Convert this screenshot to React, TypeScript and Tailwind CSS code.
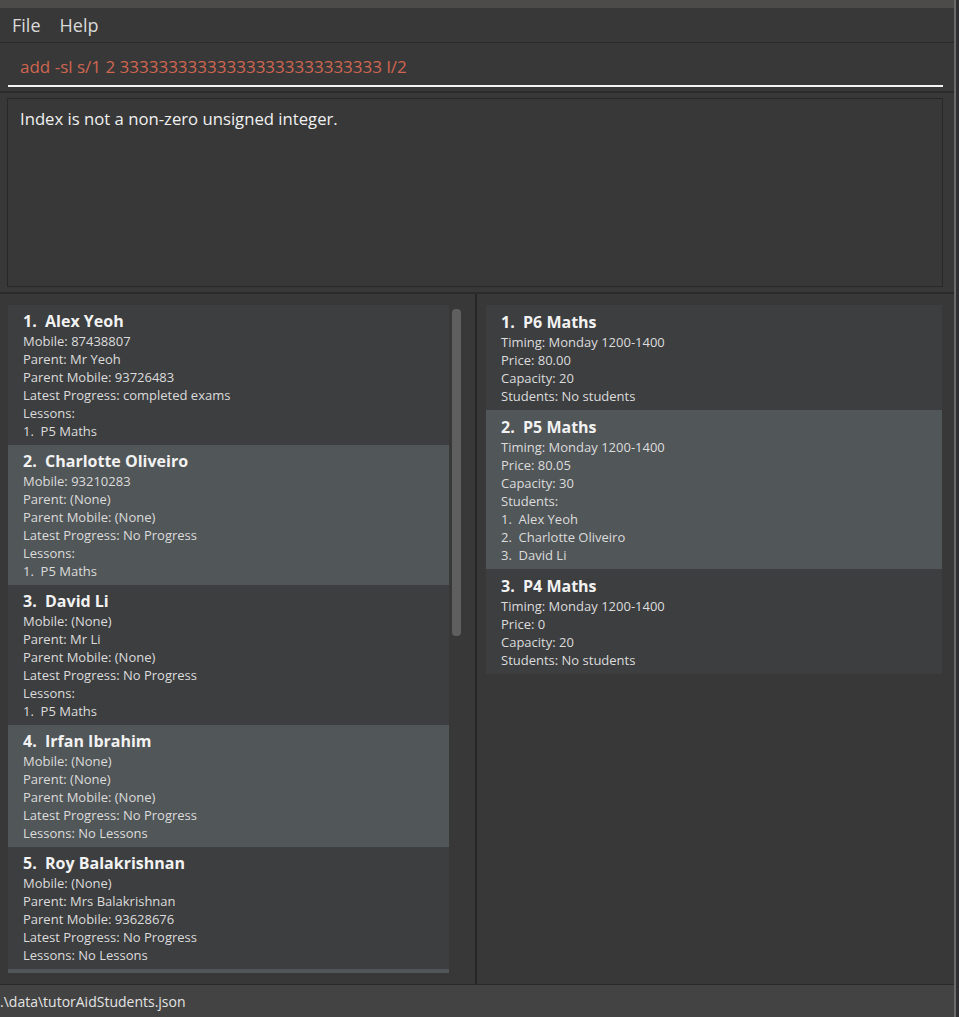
import React from 'react'

type Student = {
  name: string
  mobile: string
  parent: string
  parentMobile: string
  progress: string
  lessons: string[]
}

type Lesson = {
  name: string
  timing: string
  price: string
  capacity: string
  students: string[]
}

const students: Student[] = [
  { name: 'Alex Yeoh', mobile: '87438807', parent: 'Mr Yeoh', parentMobile: '93726483', progress: 'completed exams', lessons: ['P5 Maths'] },
  { name: 'Charlotte Oliveiro', mobile: '93210283', parent: '(None)', parentMobile: '(None)', progress: 'No Progress', lessons: ['P5 Maths'] },
  { name: 'David Li', mobile: '(None)', parent: 'Mr Li', parentMobile: '(None)', progress: 'No Progress', lessons: ['P5 Maths'] },
  { name: 'Irfan Ibrahim', mobile: '(None)', parent: '(None)', parentMobile: '(None)', progress: 'No Progress', lessons: [] },
  { name: 'Roy Balakrishnan', mobile: '(None)', parent: 'Mrs Balakrishnan', parentMobile: '93628676', progress: 'No Progress', lessons: [] },
]

const lessons: Lesson[] = [
  { name: 'P6 Maths', timing: 'Monday 1200-1400', price: '80.00', capacity: '20', students: [] },
  { name: 'P5 Maths', timing: 'Monday 1200-1400', price: '80.05', capacity: '30', students: ['Alex Yeoh', 'Charlotte Oliveiro', 'David Li'] },
  { name: 'P4 Maths', timing: 'Monday 1200-1400', price: '0', capacity: '20', students: [] },
]

function StudentCard({ s, i }: { s: Student; i: number }) {
  return (
    <div className={`shrink-0 pl-[15px] pt-[5px] pb-[5px] ${i % 2 === 1 ? 'bg-[#515658]' : 'bg-[#3c3e40]'}`}>
      <div className="whitespace-pre text-[16px] leading-[22px] font-bold text-[#f2f2f2]">{`${i + 1}.  ${s.name}`}</div>
      <div className="text-[13px] leading-[18px] text-[#dcdcdc] whitespace-pre">
        <div>Mobile: {s.mobile}</div>
        <div>Parent: {s.parent}</div>
        <div>Parent Mobile: {s.parentMobile}</div>
        <div>Latest Progress: {s.progress}</div>
        {s.lessons.length === 0 ? (
          <div>Lessons: No Lessons</div>
        ) : (
          <>
            <div>Lessons:</div>
            {s.lessons.map((l, j) => (
              <div key={j}>{`${j + 1}.  ${l}`}</div>
            ))}
          </>
        )}
      </div>
    </div>
  )
}

function LessonCard({ l, i }: { l: Lesson; i: number }) {
  return (
    <div className={`pl-[15px] pt-[6px] pb-[5px] ${i % 2 === 1 ? 'bg-[#515658]' : 'bg-[#3c3e40]'}`}>
      <div className="whitespace-pre text-[16px] leading-[22px] font-bold text-[#f2f2f2]">{`${i + 1}.  ${l.name}`}</div>
      <div className="text-[13px] leading-[18px] text-[#dcdcdc] whitespace-pre">
        <div>Timing: {l.timing}</div>
        <div>Price: {l.price}</div>
        <div>Capacity: {l.capacity}</div>
        {l.students.length === 0 ? (
          <div>Students: No students</div>
        ) : (
          <>
            <div>Students:</div>
            {l.students.map((s, j) => (
              <div key={j}>{`${j + 1}.  ${s}`}</div>
            ))}
          </>
        )}
      </div>
    </div>
  )
}

export default function App() {
  return (
    <div
      className="flex h-[1017px] w-[959px] overflow-hidden bg-[#383838]"
      style={{ fontFamily: '"Open Sans", "Noto Sans", sans-serif' }}
    >
      <div className="flex w-[954px] flex-col">
        {/* title strip */}
        <div className="h-[8px] bg-[#4c4b49]" />

        {/* menu */}
        <div className="flex h-[35px] items-center gap-[19px] border-b border-[#2a2a2a] pl-[12px] text-[18px] text-[#dadada]">
          <span>File</span>
          <span>Help</span>
        </div>

        {/* command box */}
        <div className="h-[50px] border-b-2 border-[#2b2b2b] pl-[8px] pr-[11px] pt-[8px]">
          <div className="h-[36px] border-b-2 border-[#f4f4f4] pl-[12px] text-[17px] leading-[32px] text-[#d06651]">
            add -sl s/1 2 333333333333333333333333333 l/2
          </div>
        </div>

        {/* result box */}
        <div className="h-[201px] border-b-2 border-[#2b2b2b] pl-[7px] pr-[11px] pt-[5px]">
          <div className="h-[189px] border border-[#282828] pl-[12px] pt-[8px] text-[16.7px] leading-[24px] text-[#f0f0f0]">
            Index is not a non-zero unsigned integer.
          </div>
        </div>

        {/* lists */}
        <div className="flex flex-1 min-h-0">
          <div className="flex w-[477px] pl-[8px] pt-[11px] pb-[11px] border-r-2 border-[#262626]">
            <div className="flex w-[441px] flex-col overflow-hidden">
              {students.map((s, i) => (
                <StudentCard key={i} s={s} i={i} />
              ))}
              <div className="h-[4px] shrink-0 bg-[#515658]" />
            </div>
            <div className="ml-[3px] w-[10px] pt-[4px]">
              <div className="h-[327px] w-[9px] rounded-[4px] bg-[#5f5f5f]" />
            </div>
          </div>
          <div className="flex-1 pl-[9px] pr-[12px] pt-[11px]">
            {lessons.map((l, i) => (
              <LessonCard key={i} l={l} i={i} />
            ))}
          </div>
        </div>

        {/* status bar */}
        <div className="flex h-[33px] shrink-0 items-center border-t border-[#2a2a2a] bg-[#434343] text-[14px] text-[#e4e4e4]">
          .\data\tutorAidStudents.json
        </div>
      </div>
      <div className="w-[2px] bg-[#6a6a6a]" />
      <div className="flex-1 bg-[#2e2e30]" />
    </div>
  )
}
